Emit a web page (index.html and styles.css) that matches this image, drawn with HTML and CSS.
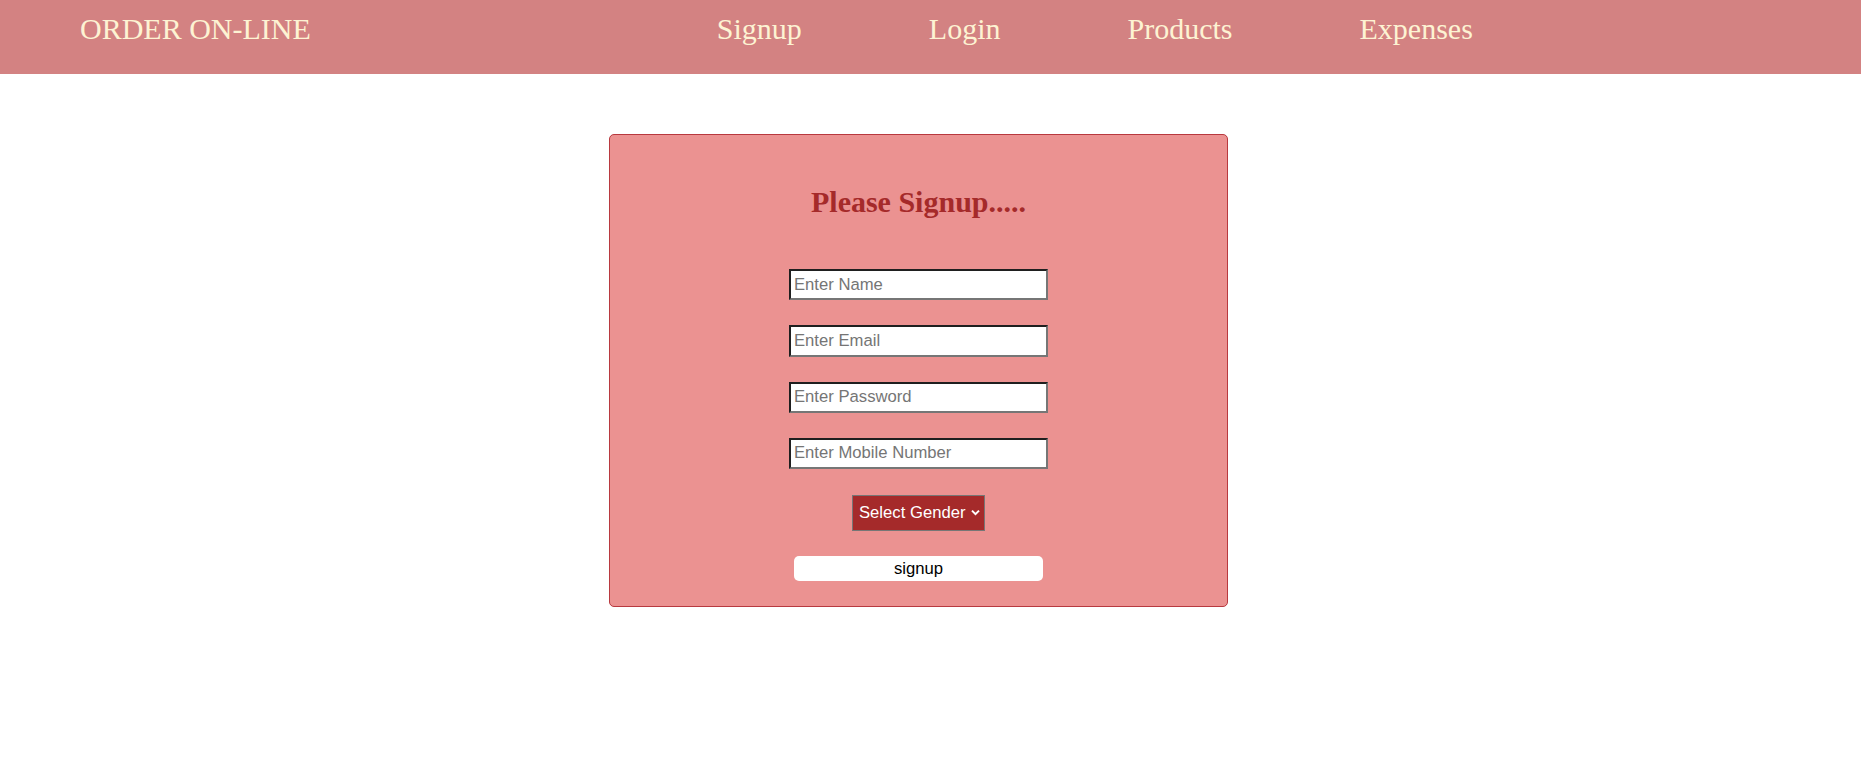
FILE: index.html
```html
<!DOCTYPE html>
<html lang="en">
<head>
<meta charset="utf-8">
<title>Order On-line - Signup</title>
<link rel="stylesheet" href="styles.css">
</head>
<body>
<header class="topbar">
  <div class="brand">ORDER ON-LINE</div>
  <nav class="menu">
    <a href="#">Signup</a>
    <a href="#">Login</a>
    <a href="#">Products</a>
    <a href="#">Expenses</a>
  </nav>
</header>
<main class="page">
  <form class="card">
    <h2 class="title">Please Signup.....</h2>
    <input class="field" type="text" placeholder="Enter Name">
    <input class="field" type="email" placeholder="Enter Email">
    <input class="field" type="password" placeholder="Enter Password">
    <input class="field" type="text" placeholder="Enter Mobile Number">
    <div class="select-wrap">
      <select class="gender">
        <option>Select Gender</option>
        <option>Male</option>
        <option>Female</option>
      </select>
      <svg class="chev" width="9" height="7" viewBox="0 0 9 7"><path d="M1 1.6 L4.5 5.1 L8 1.6" fill="none" stroke="#fff" stroke-width="2"/></svg>
    </div>
    <button class="submit" type="button">signup</button>
  </form>
</main>
</body>
</html>
```
FILE: styles.css
```css
body {
  margin: 0;
  background: #ffffff;
  font-family: "Liberation Serif", "Times New Roman", serif;
}

.topbar {
  display: flex;
  align-items: flex-start;
  height: 74px;
  box-sizing: border-box;
  padding: 12px 0 0 80px;
  background: #d38282;
}

.brand {
  font-size: 30px;
  line-height: 34px;
  color: #fdf3d3;
}

.menu {
  display: flex;
  gap: 127px;
  margin-left: 406px;
}

.menu a {
  font-size: 30px;
  line-height: 34px;
  color: #fdf3d3;
  text-decoration: none;
}

.page {
  padding: 60px 0 0 609px;
}

.card {
  width: 619px;
  box-sizing: border-box;
  display: flex;
  flex-direction: column;
  align-items: center;
  padding: 50px 0 25px;
  margin: 0;
  background: #eb9291;
  border: 1px solid #b8393f;
  border-radius: 5px;
}

.title {
  margin: 0 0 50px;
  font-size: 30px;
  line-height: 34px;
  font-weight: bold;
  color: #a52a2a;
}

.field {
  width: 259px;
  height: 31.25px;
  box-sizing: border-box;
  margin: 0 0 25px;
  padding: 0 3px;
  border: 2px solid;
  border-color: #1f1f1f #767676 #767676 #1f1f1f;
  background: #ffffff;
  font-family: "Liberation Sans", Arial, sans-serif;
  font-size: 16.67px;
  color: #000;
}

.field::placeholder {
  color: #757575;
}

.select-wrap {
  position: relative;
  margin: 0.5px 0 25.5px;
  height: 36px;
}

.gender {
  appearance: none;
  -webkit-appearance: none;
  width: 133px;
  height: 36px;
  box-sizing: border-box;
  margin: 0;
  padding: 0 6px 0 6px;
  background: #a52a2a;
  color: #ffffff;
  border: 1px solid #767676;
  border-radius: 0;
  font-family: "Liberation Sans", Arial, sans-serif;
  font-size: 16.67px;
}

.chev {
  position: absolute;
  left: 118.5px;
  top: 14.5px;
  pointer-events: none;
}

.submit {
  width: 249px;
  height: 25px;
  margin: 0;
  padding: 0;
  border: 0;
  border-radius: 5px;
  background: #ffffff;
  color: #000000;
  font-family: "Liberation Sans", Arial, sans-serif;
  font-size: 16.67px;
}
```
